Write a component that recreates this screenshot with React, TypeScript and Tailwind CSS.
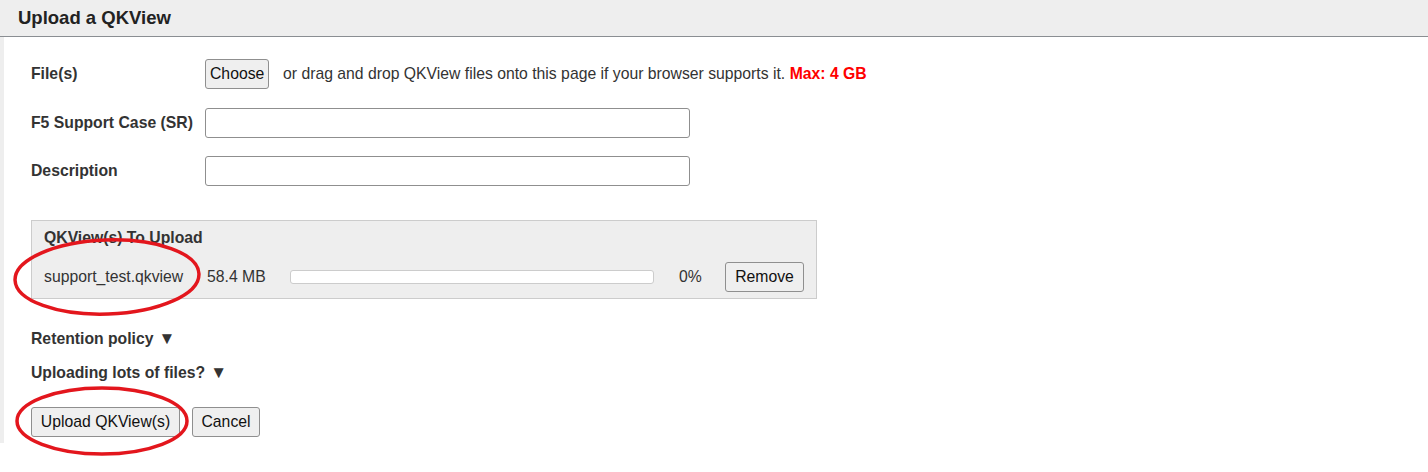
import React from "react";

const font = { fontFamily: '"Liberation Sans", Arial, sans-serif' };

function Btn({ children, className = "" }: { children: React.ReactNode; className?: string }) {
  return (
    <button
      className={
        "bg-[#efefef] border border-[#8f8f8f] rounded-[3px] text-[15.75px] text-[#111] leading-none px-[4px] " +
        className
      }
    >
      {children}
    </button>
  );
}

export default function App() {
  return (
    <div className="relative w-[1428px] h-[472px] bg-white text-[#333] overflow-hidden" style={font}>
      <div className="bg-[#eeeeee]">
        <div className="h-[37px] border-b border-[#8a8e92] flex items-center pl-[18px]">
          <h1 className="text-[18.5px] font-bold text-[#222] leading-none">Upload a QKView</h1>
        </div>
        <div className="pl-[4px]">
          <div className="bg-white pl-[27px] pt-[22px] pb-[6px] flex flex-col text-[15.75px]">
            <div className="flex items-center h-[30px]">
              <div className="w-[174px] font-bold">File(s)</div>
              <Btn className="h-[30px] w-[64px]">Choose</Btn>
              <span className="ml-[14px]">
                or drag and drop QKView files onto this page if your browser supports it.{" "}
                <span className="text-[#ff0000] font-bold">Max: 4 GB</span>
              </span>
            </div>
            <div className="flex items-center h-[30px] mt-[19px]">
              <div className="w-[174px] font-bold">F5 Support Case (SR)</div>
              <div className="w-[485px] h-[30px] border border-[#8f8f8f] rounded-[3px]" />
            </div>
            <div className="flex items-center h-[30px] mt-[18px]">
              <div className="w-[174px] font-bold">Description</div>
              <div className="w-[485px] h-[30px] border border-[#8f8f8f] rounded-[3px]" />
            </div>
            <div className="mt-[34px] w-[786px] h-[79px] bg-[#eeeeee] border border-[#cccccc] pl-[12px] pt-[8px]">
              <div className="font-bold leading-[18px]">QKView(s) To Upload</div>
              <div className="flex items-center h-[30px] mt-[15px]">
                <span className="w-[163px]">support_test.qkview</span>
                <span className="w-[83px]">58.4 MB</span>
                <div className="w-[364px] h-[14px] bg-white border border-[#cccccc] rounded-[3px]" />
                <span className="ml-[25px] w-[46px]">0%</span>
                <Btn className="h-[30px] w-[79px]">Remove</Btn>
              </div>
            </div>
            <div className="mt-[30px] h-[20px] flex items-center font-bold">
              Retention policy <span className="ml-[5px] text-[17px]">▼</span>
            </div>
            <div className="mt-[14px] h-[20px] flex items-center font-bold">
              Uploading lots of files? <span className="ml-[5px] text-[17px]">▼</span>
            </div>
            <div className="mt-[24px] flex gap-[12px]">
              <Btn className="h-[30px] w-[149px]">Upload QKView(s)</Btn>
              <Btn className="h-[30px] w-[68px]">Cancel</Btn>
            </div>
          </div>
        </div>
      </div>
      <svg className="absolute left-0 top-0 pointer-events-none" width="1428" height="472">
        <ellipse cx="107" cy="277" rx="92" ry="37" fill="none" stroke="#e3161d" strokeWidth="3.5" transform="rotate(-2 107 277)" />
        <ellipse cx="102" cy="421" rx="85" ry="33" fill="none" stroke="#e3161d" strokeWidth="3.5" />
      </svg>
    </div>
  );
}
